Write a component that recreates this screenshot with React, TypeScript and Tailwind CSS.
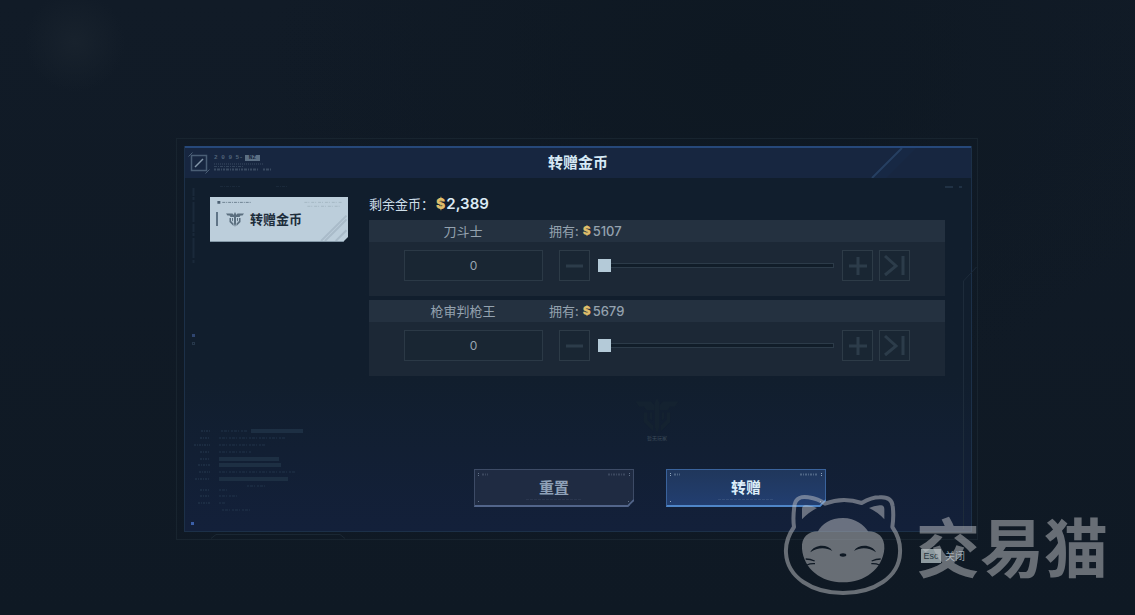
import React, { useState } from 'react'
import clsx from 'clsx'

type Account = {
  id: string
  name: string
  owned: number
}

const accounts: Account[] = [
  { id: 'blade', name: '刀斗士', owned: 5107 },
  { id: 'gun', name: '枪审判枪王', owned: 5679 },
]

function Emblem({ className }: { className?: string }) {
  return (
    <svg viewBox="0 0 36 30" className={className} fill="currentColor" aria-hidden="true">
      <path d="M0 3h13l3 3v4H9L7 7H3z" />
      <path d="M36 3H23l-3 3v4h7l2-3h4z" />
      <path d="M18 0l2 4v20l-2 6-2-6V4z" />
      <path d="M7 12h3v6l5 5v5l-8-8z" />
      <path d="M29 12h-3v6l-5 5v5l8-8z" />
      <path d="M12 12h2v7l-2-2zM24 12h-2v7l2-2z" />
    </svg>
  )
}

function Coin({ className }: { className?: string }) {
  return <span className={clsx("font-[Inter,'Noto_Sans_CJK_SC',sans-serif] font-black text-[#dfbd6a]", className)}>$</span>
}

function Header() {
  return (
    <header className="relative flex h-8 items-center justify-between border-t-2 border-[#26487a] bg-[#172640] pr-1 pl-[3px]">
      <div className="flex items-center gap-1">
        <svg viewBox="0 0 22 23" className="h-[23px] w-[22px]" fill="none" stroke="#4a5e75" aria-hidden="true">
          <path d="M3.500 3.500h15v15h-15z" strokeWidth="1.500" />
          <path d="M7 15l8-8" stroke="#8598aa" strokeWidth="1.500" />
          <path d="M0.500 4.500l4-4M17.500 21.500l4-4" />
        </svg>
        <div className="flex flex-col gap-[2px] text-[#506379]">
          <div className="flex items-center gap-[2px] font-['Liberation_Mono',monospace] text-[6px] leading-[6px] font-bold">
            <span>2 0 9 5-</span>
            <span className="bg-[#5b6f84] px-1 text-[#172640]">NZ</span>
          </div>
          <svg viewBox="0 0 58 8" className="h-2 w-[58px]" stroke="currentColor" aria-hidden="true">
            <path d="M0 1h50" strokeDasharray="1 1" opacity=".6" />
            <path d="M0 3.500h30" strokeDasharray="3 1 1 1" opacity=".5" />
            <path d="M0 6.500h45M49 6.500h9" strokeWidth="2" strokeDasharray="2 1 3 1 1 1" opacity=".6" />
          </svg>
        </div>
      </div>
      <h1 className="absolute inset-x-0 top-1 text-center text-[15px] leading-5 font-bold text-[#d6eaf6]">转赠金币</h1>
      <svg viewBox="0 0 96 30" className="h-[30px] w-24" aria-hidden="true">
        <path d="M0 30L30 0h15L15 30z" fill="#1a2e4b" opacity=".4" />
        <path d="M1 30L31 0" stroke="#263f61" strokeWidth="2" />
      </svg>
    </header>
  )
}

function Sidebar() {
  return (
    <nav className="w-[138px] shrink-0 pt-[3px]">
      <button
        type="button"
        className="relative flex h-[45px] w-full items-center border-b border-[#8397a6] bg-[#bccedb] pl-[6px] text-[#1c2c3a] [clip-path:polygon(0_0,100%_0,100%_40px,133px_100%,0_100%)]"
      >
        <svg viewBox="0 0 138 45" className="absolute inset-0 h-full w-full" fill="none" aria-hidden="true">
          <path d="M6 4h3v3h-3z" fill="#4c6072" />
          <path d="M11 5.500h29" stroke="#4c6072" strokeDasharray="3 1 1 1" opacity=".7" />
          <path d="M95 5.500h38M98 9.500h34" stroke="#a5b7c4" strokeDasharray="3 1 1 2" />
          <path d="M112 45l26-26M116 45l22-22M127 45l11-11" stroke="#a9bbc9" strokeWidth="2" />
        </svg>
        <span className="h-[14px] w-[2px] bg-[#607587]" />
        <Emblem className="ml-2 h-[15px] w-[18px] text-[#5b6f7f]" />
        <span className="ml-[6px] text-[13px] leading-5 font-bold">转赠金币</span>
      </button>
    </nav>
  )
}

type StepButtonProps = {
  label: string
  path: string
  onClick: () => void
}

function StepButton({ label, path, onClick }: StepButtonProps) {
  return (
    <button
      type="button"
      aria-label={label}
      onClick={onClick}
      className="flex h-[31px] w-[31px] shrink-0 items-center justify-center border border-[#2d3b47] bg-[#192633]"
    >
      <svg viewBox="0 0 29 29" className="h-[29px] w-[29px]" fill="none" stroke="#2c3c4a" strokeWidth="3" aria-hidden="true">
        <path d={path} />
      </svg>
    </button>
  )
}

function AccountCard({ account }: { account: Account }) {
  const [amount, setAmount] = useState(0)
  const update = (value: number) => setAmount(Math.max(0, Math.min(account.owned, value || 0)))

  return (
    <section className="bg-[#1c2836]">
      <div className="flex h-[22px] items-center bg-[#243140] text-[13px] leading-5 text-[#94a2af]">
        <h2 className="w-[180px] pl-2 text-center">{account.name}</h2>
        <p className="flex items-center">
          拥有:
          <Coin className="ml-1 text-[12px]" />
          <span className="ml-[2px] font-[Inter,'Noto_Sans_CJK_SC',sans-serif] text-[13px] font-medium">{account.owned}</span>
        </p>
      </div>
      <div className="flex items-center px-[35px] pt-2 pb-[15px]">
        <input
          type="text"
          aria-label={`${account.name} 转赠数量`}
          value={amount}
          onChange={(e) => update(parseInt(e.target.value, 10))}
          className="h-[31px] w-[139px] border border-[#2b3946] bg-[#192633] text-center font-[Inter,'Noto_Sans_CJK_SC',sans-serif] text-[12px] text-[#97a5b1] outline-none"
        />
        <div className="ml-4 flex flex-1 items-center gap-2">
          <StepButton label="减少" path="M6 15h17" onClick={() => update(amount - 1)} />
          <input
            type="range"
            aria-label={`${account.name} 数量滑块`}
            min={0}
            max={account.owned}
            value={amount}
            onChange={(e) => update(Number(e.target.value))}
            className="h-[13px] min-w-0 flex-1 appearance-none bg-transparent [&::-webkit-slider-runnable-track]:h-[5px] [&::-webkit-slider-runnable-track]:border-y [&::-webkit-slider-runnable-track]:border-r [&::-webkit-slider-runnable-track]:border-[#2c3b49] [&::-webkit-slider-runnable-track]:bg-[#111d29] [&::-webkit-slider-thumb]:-mt-[5px] [&::-webkit-slider-thumb]:h-[13px] [&::-webkit-slider-thumb]:w-[13px] [&::-webkit-slider-thumb]:appearance-none [&::-webkit-slider-thumb]:bg-[#b4cad8]"
          />
          <StepButton label="增加" path="M6 15h18M15 6v18" onClick={() => update(amount + 1)} />
        </div>
        <div className="ml-[6px]">
          <StepButton label="最大" path="M5 5l11 10-11 9M23 5v19" onClick={() => update(account.owned)} />
        </div>
      </div>
    </section>
  )
}

function ActionButton({ label, primary = false, onClick }: { label: string; primary?: boolean; onClick?: () => void }) {
  return (
    <button
      type="button"
      onClick={onClick}
      className={clsx(
        'relative h-[38px] w-40 border border-b-2 pb-[2px] text-[15px] leading-5 font-bold [clip-path:polygon(0_0,100%_0,100%_32px,154px_100%,0_100%)]',
        primary
          ? 'border-[#3a639c] border-b-[#4f86c8] bg-linear-to-b from-[#20375c] to-[#223e70] text-[#dceefa]'
          : 'border-[#3d4b66] border-b-[#52658a] bg-[#1f2b42] text-[#8fa1b8]',
      )}
    >
      <svg viewBox="0 0 160 38" className="absolute -top-px -left-px h-[38px] w-40" fill="none" stroke="currentColor" aria-hidden="true">
        <path d="M4.500 4v3M155.500 4v3M4.500 32v2M154.500 32v2" strokeDasharray="1 1" opacity=".6" />
        <path d="M8 5.500h6M134 5.500h18" strokeWidth="2" strokeDasharray="2 1 1 1" opacity=".25" />
        <path d="M52 30.500h56" strokeDasharray="3 1" opacity=".1" />
        <path d="M153 38l7-7" strokeWidth="2" className={primary ? 'stroke-[#4f86c8]' : 'stroke-[#52658a]'} />
      </svg>
      {label}
    </button>
  )
}

function DataReadout() {
  return (
    <svg viewBox="0 0 120 90" className="absolute bottom-[13px] left-[7px] h-[90px] w-[120px]" stroke="#263a50" fill="none" aria-hidden="true">
      <path
        d="M9 3h9M8 10h10M2 17h16M8 24h10M8 31h10M6 37h12M7 44h11M3 51h15M8 62h10M8 68h10M6 75h12"
        strokeWidth="2"
        strokeDasharray="2 1 1 1"
        opacity=".5"
      />
      <path
        d="M29 3h26M27 10h66M27 17h46M27 24h32M27 44h76M55 58h20M27 62h9M27 68h18M27 75h6M30 82h30"
        strokeWidth="2"
        strokeDasharray="2 1 3 1 1 2"
        opacity=".4"
      />
      <path d="M59 3h52M27 31h60M27 37h62M27 51h69" stroke="#1d2f43" strokeWidth="4" />
    </svg>
  )
}

function Watermark() {
  return (
    <div className="pointer-events-none absolute right-[27px] bottom-[19px] flex items-center gap-[13px] text-[#c0c2c6] opacity-50">
      <svg viewBox="36 26 360 306" className="h-[102px] w-[120px]" aria-hidden="true">
        <defs>
          <mask id="cat-face">
            <rect x="36" y="26" width="360" height="306" fill="#fff" />
            <path d="M118 201c10-23 52-27 66-4-21-12-46-10-66 4zM249 197c14-23 56-19 66 4-20-14-45-16-66-4z" fill="#000" />
            <ellipse cx="216" cy="209" rx="10" ry="5" fill="#000" />
            <path
              d="M104 221q14 0 27 6M108 239q10-5 24-4M329 221q-14 0-27 6M325 239q-10-5-24-4"
              fill="none"
              stroke="#000"
              strokeWidth="4"
            />
          </mask>
        </defs>
        <path
          d="M69 125C66 104 67 82 71 57C75 39 92 32 112 36C132 39 150 46 162 55C198 41 236 41 272 53C288 44 306 36 325 36C348 34 363 42 365 62C368 84 367 105 364 125C382 151 389 175 387 203C384 275 310 323 216 323C122 323 49 275 45 203C43 176 51 151 69 125Z"
          fill="none"
          stroke="currentColor"
          strokeWidth="12"
          strokeLinejoin="round"
        />
        <path d="M93 102V70Q94 57 108 60Q125 62 138 68Q111 82 93 102ZM340 102V70Q339 57 326 60Q308 62 294 68Q322 81 340 102Z" fill="currentColor" />
        <path
          d="M216 98C254 98 280 120 291 138C320 138 342 155 340 190C335 250 282 291 216 291C150 291 98 250 93 190C90 155 113 138 141 138C152 117 178 98 216 98Z"
          fill="currentColor"
          mask="url(#cat-face)"
        />
      </svg>
      <span className="pb-[2px] text-[64px] leading-[64px] font-bold whitespace-nowrap">交易猫</span>
    </div>
  )
}

export default function App() {
  const [resetKey, setResetKey] = useState(0)

  return (
    <div className="relative min-h-screen overflow-hidden bg-[#101a26] bg-[radial-gradient(circle_at_75px_42px,#18222d_0,transparent_50px),radial-gradient(ellipse_at_65%_10%,#0e1822_0,transparent_45%),linear-gradient(#111b27,#0f1924)] pt-[138px] pr-[157px] pl-[176px] font-['Noto_Sans_CJK_SC',sans-serif]">
      <div className="relative border border-[#18242f] py-[7px] pr-[5px] pl-[7px]">
        <svg viewBox="0 0 170 6" className="absolute bottom-0 left-[34px] h-[6px] w-[170px]" fill="none" stroke="#1a2733" aria-hidden="true">
          <path d="M0 5.500l5-4h124l5 4" />
        </svg>
        <main className="relative border-r border-b border-l border-[#1c3048] bg-linear-to-b from-[#111e2d] from-60% to-[#13203a]">
          <Header />
          <span className="absolute bottom-[6px] left-[6px] h-[3px] w-[3px] bg-[#3b5fa8]" />
          <span className="absolute top-[188px] left-[7px] h-[3px] w-[3px] bg-[#2f456f]" />
          <span className="absolute top-[196px] left-[7px] h-[3px] w-[3px] border border-[#26374a]" />
          <svg viewBox="0 0 120 90" className="absolute top-[38px] left-[7px] h-[90px] w-[120px]" fill="none" stroke="#1a293a" aria-hidden="true">
            <path d="M1.500 4v75" strokeWidth="2" strokeDasharray="8 1 3 2 20 2" />
            <path d="M28 2.500h20M84 2.500h12" strokeDasharray="3 1 1 1" />
          </svg>
          <svg viewBox="0 0 20 3" className="absolute top-10 right-[6px] h-[3px] w-5" fill="#203144" aria-hidden="true">
            <path d="M0 0h8v2h-8zM14 0h3v2h-3z" />
          </svg>
          <DataReadout />
          <div className="relative flex gap-[21px] pt-4 pr-[26px] pb-6 pl-[25px]">
            <Sidebar />
            <div className="min-w-0 flex-1">
              <p className="flex h-5 items-center text-[13px] leading-5 text-[#cddde8]">
                剩余金币：
                <Coin className="ml-[2px] text-[14px]" />
                <span className="ml-px font-[Inter,'Noto_Sans_CJK_SC',sans-serif] text-[15px] font-semibold text-[#dcebf5]">2,389</span>
              </p>
              <div key={resetKey} className="mt-[6px] flex flex-col gap-1">
                {accounts.map((account) => (
                  <AccountCard key={account.id} account={account} />
                ))}
              </div>
              <div className="mt-[22px] flex h-[46px] flex-col items-center">
                <Emblem className="h-9 w-11 text-[#142230]" />
                <span className="text-[5px] leading-[8px] text-[#3b4a59]">暂无玩家</span>
              </div>
              <div className="mt-[25px] flex justify-center gap-8 pr-[14px]">
                <ActionButton label="重置" onClick={() => setResetKey(resetKey + 1)} />
                <ActionButton label="转赠" primary />
              </div>
            </div>
          </div>
        </main>
        <svg viewBox="0 0 16 262" className="absolute top-[128px] right-0 h-[262px] w-4" fill="none" stroke="#1d2b3a" aria-hidden="true">
          <path d="M15.500 0L2.500 14v248" />
        </svg>
      </div>
      <div className="mt-2 flex justify-end pr-[13px]">
        <button type="button" className="flex items-center gap-1 text-[10px] leading-4 text-[#98a5ae]">
          <kbd className="flex h-[14px] w-5 items-center justify-center bg-[#8d9a9f] font-['Liberation_Sans',sans-serif] text-[9px] text-[#26343d]">Esc</kbd>
          关闭
        </button>
      </div>
      <Watermark />
    </div>
  )
}
